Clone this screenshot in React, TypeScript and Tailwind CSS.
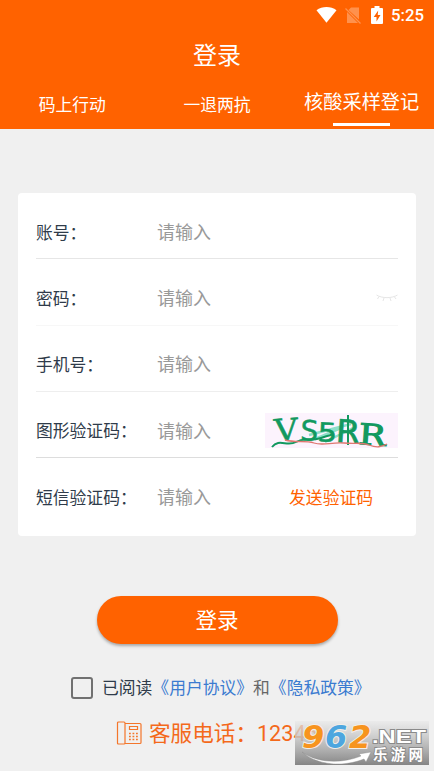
import { useState } from "react";
import type { ReactNode } from "react";
import clsx from "clsx";

const tabs = ["码上行动", "一退两抗", "核酸采样登记"];

function StatusBar() {
  return (
    <div className="flex h-[30px] items-center justify-end pr-[10px] text-white">
      <svg className="mr-[8px] h-[18px] w-[21px]" viewBox="0 0 22 18" fill="currentColor">
        <path d="M0.5 4C6.5 -0.500 15.5 -0.500 21.5 4L11 17Z" />
      </svg>
      <svg className="mr-[10px] h-[17px] w-4 opacity-30" viewBox="0 0 16 17">
        <path d="M6 0.500h8v12L3.500 3zM2 5V16h11z" fill="currentColor" />
        <path d="M0.5 1.5L15.5 16.5" stroke="currentColor" strokeWidth="1.3" />
      </svg>
      <svg className="mr-[8px] h-[18px] w-3" viewBox="0 0 12 18">
        <path
          d="M3.5 0h5v2H11a1 1 0 0 1 1 1v14a1 1 0 0 1-1 1H1a1 1 0 0 1-1-1V3a1 1 0 0 1 1-1h2.500z"
          fill="currentColor"
        />
        <path d="M7.200 4.500L2.700 11h2.800v4.500L9.500 9H6.700z" fill="#ff6200" />
      </svg>
      <span className="text-[16.8px] leading-none font-medium">5:25</span>
    </div>
  );
}

function Header() {
  const [active, setActive] = useState(2);
  return (
    <header className="h-[129px] bg-[#ff6200] text-white">
      <StatusBar />
      <h1 className="flex h-[52px] items-center justify-center text-2xl">登录</h1>
      <nav className="grid h-[44px] grid-cols-3">
        {tabs.map((tab, i) => (
          <button
            key={tab}
            onClick={() => setActive(i)}
            className={clsx(
              "flex flex-col items-center whitespace-nowrap",
              i === active ? "pt-[8px] text-[19.2px]" : "pt-[10px] text-[16.8px]",
            )}
          >
            <span className="leading-[26px]">{tab}</span>
            {i === active && <span className="mt-[7px] h-[3px] w-[57px] shrink-0 bg-white" />}
          </button>
        ))}
      </nav>
    </header>
  );
}

type FieldProps = { label: string; line?: string; children?: ReactNode };

function Field({ label, line = "border-transparent", children }: FieldProps) {
  return (
    <div className={clsx("flex h-[66.3px] items-center border-b pt-[13px]", line)}>
      <span className="w-[121px] shrink-0 pt-[2px] text-[16.8px] whitespace-nowrap text-[#2f3b4a]">{label}</span>
      <input
        placeholder="请输入"
        className="w-[90px] min-w-0 pt-px text-lg leading-[26px] outline-none placeholder:text-[#999]"
      />
      <div className="ml-auto flex shrink-0 items-center">{children}</div>
    </div>
  );
}

function Captcha() {
  return (
    <svg className="-mt-px h-[35px] w-[133px] overflow-visible" viewBox="0 0 133 35">
      <rect width="133" height="35" fill="#fcf3fd" />
      <path d="M44 22L86 11M50 26L76 15M60 29L88 15" stroke="#8edfc9" strokeWidth="2.500" fill="none" />
      <g fill="#12995f" stroke="#12995f" strokeWidth="0.500" fontFamily="'DejaVu Sans', sans-serif">
        <text transform="translate(10 28) rotate(-4) scale(1.100 1)" fontSize="30" fontFamily="'DejaVu Serif', serif">V</text>
        <text transform="translate(35 27) rotate(3)" fontSize="28">S</text>
        <text transform="translate(52 28) rotate(3) scale(1.200 1)" fontSize="26">5</text>
        <text transform="translate(70 29) rotate(4) scale(1.120 1)" fontSize="32">R</text>
        <text transform="translate(93 31) rotate(4) scale(1.250 1)" fontSize="29" strokeWidth="1" fontFamily="'DejaVu Serif', serif">R</text>
      </g>
      <path d="M83 2V32" stroke="#12995f" strokeWidth="2" />
      <path d="M7 34C14 25 22 34 31 29S44 29 56 25S64 23 68 21" stroke="#12995f" strokeWidth="2" fill="none" />
      <path d="M20 27C31 30 40 27 49 30S66 29 79 30S96 29 104 32S116 34 122 31" stroke="#df7770" strokeWidth="1.300" fill="none" />
    </svg>
  );
}

function ClosedEye() {
  return (
    <svg className="h-2 w-[22px]" viewBox="0 0 22 8" fill="none" stroke="#e6e6e6">
      <path d="M0.500 1C6 4.500 16 4.500 21.500 1M3 2.500L1.500 5M8 4L7 7M14 4L15 7M18.500 3L20 5" />
    </svg>
  );
}

function PhoneIcon() {
  return (
    <svg className="-mt-[3px] h-6 w-[26px]" viewBox="0 0 26 24" fill="none" stroke="#f4762b" strokeWidth="1.200">
      <path d="M1.500 2Q1.500 1 2.500 1H8Q9 1 9 2V22Q9 23 8 23H2.500Q1.500 23 1.500 22ZM9 2.500H24Q25 2.500 25 3.500V21.500Q25 22.500 24 22.500H9" />
      <path d="M13.500 5.500H21.500V8.500H13.500Z" />
      <path d="M13 12.500H22M13 15.500H22M13 18.500H22" strokeWidth="1.600" strokeDasharray="1.800 1.700" />
    </svg>
  );
}

function Watermark() {
  return (
    <svg className="absolute top-[721px] left-[295px] h-11 w-[134px] overflow-visible" viewBox="0 0 134 44">
      <defs>
        <linearGradient id="badge" x1="0" y1="0" x2="0" y2="1">
          <stop offset="0" stopColor="#e9e9e9" stopOpacity="0.700" />
          <stop offset="1" stopColor="#858585" />
        </linearGradient>
      </defs>
      <rect width="134" height="44" fill="url(#badge)" />
      <g
        fontFamily="'DejaVu Sans', sans-serif"
        fontWeight="bold"
        fontStyle="italic"
        fontSize="32"
        stroke="#f3eee8"
        strokeWidth="2"
        paintOrder="stroke"
      >
        <text x="7" y="27" fill="#f7941e">9</text>
        <text x="30" y="27" fill="#4da6df">6</text>
        <text x="54" y="27" fill="#f7941e">2</text>
      </g>
      <path d="M7 31C22 42 46 43 66 35L64 33L76 31L71 41L69 38C49 46 23 45 7 31Z" fill="#fff" stroke="#888" strokeWidth="0.400" />
      <g fill="#fff" stroke="#8a8a8a" strokeWidth="1.800" paintOrder="stroke" fontWeight="bold">
        <text x="77" y="22" fontSize="19" textLength="54" lengthAdjust="spacingAndGlyphs" fontFamily="'Liberation Sans', sans-serif">
          .NET
        </text>
        <text x="78" y="39" fontSize="14.500" textLength="50" fontFamily="'Noto Sans CJK SC', sans-serif">乐游网</text>
      </g>
    </svg>
  );
}

export default function App() {
  return (
    <div className="relative h-[771px] w-[434px] overflow-hidden bg-[#f0f0f0] font-[Roboto,'Noto_Sans_CJK_SC',sans-serif]">
      <Header />

      <main>
        <section className="mx-[18px] mt-16 h-[343px] rounded bg-white px-[18px]">
          <Field label="账号：" line="border-[#e6e6e6]" />
          <Field label="密码：" line="border-[#f7f7f7]">
            <ClosedEye />
          </Field>
          <Field label="手机号：" line="border-[#eeeeee]" />
          <Field label="图形验证码：" line="border-[#dddddd]">
            <Captcha />
          </Field>
          <Field label="短信验证码：">
            <button className="mr-[25px] pt-[2px] text-[16.8px] text-[#ff6200]">发送验证码</button>
          </Field>
        </section>

        <button className="mx-auto mt-[60px] block h-12 w-[241px] rounded-full bg-[#ff6200] pt-[2px] text-[21.6px] text-white shadow-[0_2px_3px_rgba(0,0,0,0.3)]">
          登录
        </button>

        <label className="mt-[31px] ml-[71px] flex h-[26px] items-center text-[16.8px] whitespace-nowrap text-[#2f3b4a]">
          <input type="checkbox" className="mr-[9px] size-[22px] shrink-0 appearance-none rounded-[3px] border-2 border-[#717171]" />
          <span className="pt-[2px]">
            已阅读
            <span className="text-[#3b7bd0]">《用户协议》</span>
            <span className="text-[#666]">和</span>
            <span className="text-[#3b7bd0]">《隐私政策》</span>
          </span>
        </label>

        <div className="mt-[17px] ml-[116px] flex h-8 items-center text-[21.6px] whitespace-nowrap text-[#f4691b]">
          <PhoneIcon />
          <span className="ml-[7px]">客服电话：12345</span>
        </div>
      </main>

      <Watermark />
    </div>
  );
}
